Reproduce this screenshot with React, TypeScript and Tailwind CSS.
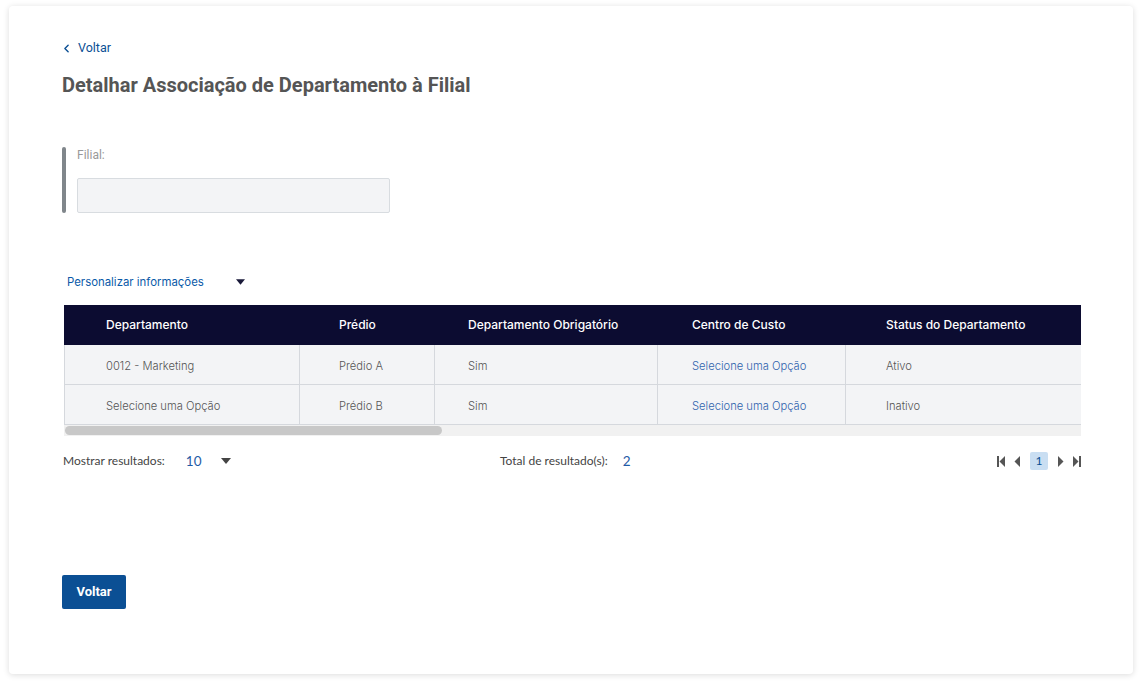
import { ChevronLeft } from "lucide-react";

const cols = [
  { label: "Departamento", w: "w-[236px]", pl: "pl-[42px]" },
  { label: "Prédio", w: "w-[135px]", pl: "pl-[39px]" },
  { label: "Departamento Obrigatório", w: "w-[223px]", pl: "pl-[33px]" },
  { label: "Centro de Custo", w: "w-[188px]", pl: "pl-[34px]" },
  { label: "Status do Departamento", w: "w-[260px]", pl: "pl-[40px]" },
];

const rows = [
  ["0012 - Marketing", "Prédio A", "Sim", "Selecione uma Opção", "Ativo"],
  ["Selecione uma Opção", "Prédio B", "Sim", "Selecione uma Opção", "Inativo"],
];

function Caret({ className = "" }: { className?: string }) {
  return (
    <svg width="10" height="6" viewBox="0 0 10 6" className={className}>
      <path d="M0 0h10L5 6z" fill="currentColor" />
    </svg>
  );
}

function PagerIcon({ dir, edge }: { dir: "l" | "r"; edge?: boolean }) {
  return (
    <svg width="8" height="11" viewBox="0 0 8 11" className="text-[#555]">
      {dir === "l" ? (
        <>
          {edge && <rect x="0" y="0" width="2" height="11" fill="currentColor" />}
          <path d={edge ? "M8 0v11L2.5 5.5z" : "M7 0v11L1.5 5.5z"} fill="currentColor" />
        </>
      ) : (
        <>
          <path d={edge ? "M0 0v11l5.5-5.5z" : "M1 0v11l5.5-5.5z"} fill="currentColor" />
          {edge && <rect x="6" y="0" width="2" height="11" fill="currentColor" />}
        </>
      )}
    </svg>
  );
}

export default function App() {
  return (
    <div className="min-h-[687px] bg-white pl-[9px] pr-[9px] pt-[6px] pb-[13px] font-['Roboto',sans-serif]">
      <div className="h-[668px] rounded-[4px] bg-white pl-[53px] pr-[52px] pt-[34px] shadow-[0_1px_6px_rgba(0,0,0,0.14)]">
        <a className="flex h-[16px] items-center text-[12.5px] text-[#0b4f94]">
          <ChevronLeft size={13} strokeWidth={2.6} className="-ml-[2px]" />
          <span className="ml-[5px]">Voltar</span>
        </a>
        <h1 className="mt-[18px] text-[20px] font-bold leading-[22px] text-[#555]">
          Detalhar Associação de Departamento à Filial
        </h1>

        <div className="mt-[51px] flex">
          <div className="w-[4px] h-[66px] rounded-[2px] bg-[#80868b]" />
          <div className="pl-[11px]">
            <div className="text-[12px] leading-[16px] text-[#999]">Filial:</div>
            <div className="mt-[15px] h-[35px] w-[313px] rounded-[2px] border border-[#d8dce0] bg-[#f3f4f6]" />
          </div>
        </div>

        <div className="mt-[61px] flex items-center pl-[5px] font-['Inter',sans-serif]">
          <span className="text-[11.4px] leading-[16px] text-[#0b5aa8]">Personalizar informações</span>
          <Caret className="ml-[32px] text-[#1a1a3a] w-[9px]" />
        </div>

        <div className="mt-[15px] ml-[2px] w-[1017px] overflow-hidden font-['Inter',sans-serif]">
          <div className="flex h-[40px] w-max bg-[#0c0c31] text-white">
            {cols.map((c) => (
              <div key={c.label} className={`${c.w} ${c.pl} flex shrink-0 items-center text-[12px] font-medium`}>
                {c.label}
              </div>
            ))}
          </div>
          {rows.map((r, i) => (
            <div key={i} className="flex h-[40px] w-max border-b border-l border-[#d5d8dd] bg-[#f3f4f6]">
              {r.map((v, j) => (
                <div
                  key={j}
                  className={`${j === 0 ? "w-[235px] pl-[41px]" : `${cols[j].w} ${cols[j].pl}`} flex shrink-0 items-center pt-[3px] text-[11.2px] font-light ${
                    j < 4 ? "border-r border-[#d5d8dd]" : ""
                  } ${j === 3 ? "text-[#2f63ad]" : "text-[#555]"}`}
                >
                  {v}
                </div>
              ))}
            </div>
          ))}
          <div className="h-[11px] bg-[#f1f1f1] pt-[1px]">
            <div className="ml-[1px] h-[9px] w-[377px] rounded-full bg-[#c8c8c8]" />
          </div>
        </div>

        <div className="mt-[15px] flex h-[20px] w-[1019px] items-center font-['Lato',sans-serif]">
          <div className="flex w-[438px] items-center pl-[1px]">
            <span className="text-[12px] text-[#444]">Mostrar resultados:</span>
            <span className="ml-[21px] text-[13.5px] text-[#1f5ba6]">10</span>
            <Caret className="ml-[19px] w-[10px] text-[#444]" />
          </div>
          <div className="flex items-center">
            <span className="text-[12px] text-[#444]">Total de resultado(s):</span>
            <span className="ml-[15px] text-[13.5px] text-[#1f5ba6]">2</span>
          </div>
          <div className="ml-auto flex items-center">
            <PagerIcon dir="l" edge />
            <span className="ml-[8px]"><PagerIcon dir="l" /></span>
            <span className="ml-[9px] flex h-[18px] w-[18px] items-center justify-center rounded-[2px] bg-[#c9def2] text-[12px] text-[#0b4f94]">
              1
            </span>
            <span className="ml-[9px]"><PagerIcon dir="r" /></span>
            <span className="ml-[8px]"><PagerIcon dir="r" edge /></span>
          </div>
        </div>

        <button className="mt-[104px] h-[34px] w-[64px] rounded-[2px] bg-[#0b4f94] text-[13px] font-bold text-white">
          Voltar
        </button>
      </div>
    </div>
  );
}
